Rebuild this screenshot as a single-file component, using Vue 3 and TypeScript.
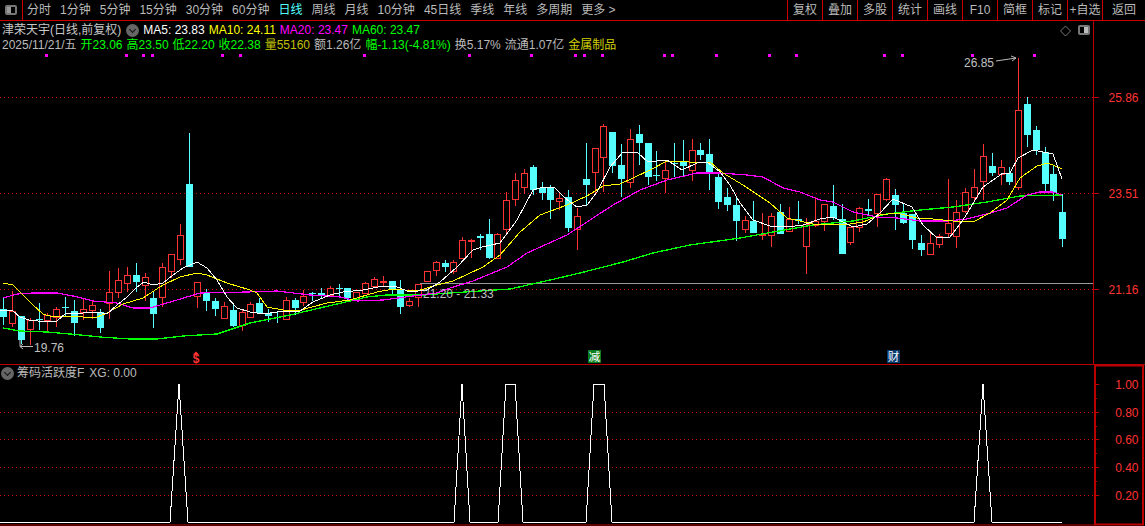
<script setup lang="ts">
type Candle = [number, number, number, number, 0 | 1];
const STEP = 8.825;
const raw: Candle[] = [
[309,317,298,325,0],[311,323,291,327,1],[316,340,316,344,0],[320,329,318,345,1],[319,320,303,330,0],[315,320,313,331,1],[309,317,307,327,1],[307,308,297,317,0],[311,323,300,336,0],[309,312,299,320,1],
[305,310,300,319,1],[312,328,309,333,0],[292,303,271,319,1],[280,292,268,298,1],[275,283,267,292,1],[275,282,263,292,0],[277,285,273,301,1],[298,314,291,328,0],[267,297,263,307,1],[254,271,254,278,1],
[235,259,224,265,1],[184,267,133,267,0],[282,296,282,308,1],[293,301,289,311,0],[301,309,298,316,0],[306,318,302,318,1],[310,326,304,327,0],[312,325,310,331,1],[304,317,302,317,1],[303,313,298,313,0],
[313,316,309,322,0],[317,318,312,323,0],[300,319,297,319,1],[300,308,298,315,0],[296,302,290,306,1],[293,294,292,301,0],[293,296,288,299,0],[288,295,286,297,1],[288,289,284,297,0],[288,298,288,300,0],
[292,299,292,300,1],[283,293,282,293,1],[279,286,277,287,1],[281,282,276,287,1],[281,289,281,295,0],[290,307,280,314,0],[301,305,298,307,1],[284,297,284,307,1],[271,281,271,282,1],[262,270,261,276,1],
[263,267,260,272,0],[262,271,260,274,1],[240,258,237,258,1],[240,241,239,258,1],[236,238,234,250,0],[234,258,219,259,0],[234,258,233,258,1],[200,229,192,233,1],[180,199,173,206,1],[173,187,169,194,1],
[167,190,165,195,0],[188,193,182,200,0],[187,200,185,219,0],[198,201,193,210,1],[197,228,190,232,0],[216,229,208,250,1],[179,185,143,205,0],[148,172,148,193,1],[126,157,124,192,1],[132,166,132,173,0],
[165,179,144,197,0],[139,182,129,188,1],[134,143,125,165,0],[143,177,143,185,0],[175,176,151,181,0],[170,178,160,193,1],[163,164,143,177,0],[161,166,140,177,0],[150,170,139,181,1],[150,155,143,160,0],
[154,174,139,190,0],[177,202,173,209,0],[197,205,188,211,0],[205,221,197,241,0],[220,229,216,233,1],[221,233,201,233,0],[234,235,213,240,1],[216,235,213,247,1],[212,234,204,234,0],[219,231,207,231,1],
[219,221,201,224,0],[224,246,218,274,1],[221,225,197,227,1],[204,221,204,231,1],[206,218,185,220,0],[219,254,204,254,0],[227,242,227,245,1],[208,227,207,232,1],[209,211,199,216,0],[194,213,194,227,1],
[179,199,178,201,1],[195,205,189,230,0],[213,223,203,224,0],[214,240,214,249,0],[243,250,235,256,0],[243,254,233,254,1],[236,244,234,248,1],[223,233,179,237,1],[212,236,200,248,1],[192,211,188,213,1],
[187,197,169,202,1],[156,181,144,200,1],[166,173,153,176,0],[167,174,160,185,1],[173,182,167,185,0],[110,187,58,190,1],[104,135,97,147,0],[130,150,126,155,0],[152,184,147,192,0],[174,193,165,201,0],
[212,239,194,247,0],
];
const candles = raw.map((c, i) => {
  const x = Math.round(3.3 + i * STEP);
  return { x, top: c[0], h: Math.max(c[1] - c[0], 1), w1: c[2], w2: c[3], up: c[4] === 1 };
});
const ma5 = "0,310 13,311 20,317 29,320 38,321 50,321 57,321 65,314 83,313 97,312 107,314 117,305 127,297 137,287 144,282 153,285 163,283 173,275 183,268 197,262 207,268 217,280 227,297 237,308 250,312 263,314 277,312 300,311 313,302 330,295 343,292 363,290 383,286 397,287 410,292 427,290 440,282 457,267 473,250 482,247 500,243 517,220 533,190 543,187 555,188 565,198 577,207 587,205 597,192 610,167 623,152 637,152 648,162 667,160 682,170 697,163 707,162 720,172 730,185 740,203 753,220 770,226 787,227 803,225 820,219 833,217 853,227 867,224 880,213 893,199 912,207 923,225 937,238 950,237 963,220 983,187 1003,173 1010,173 1018,158 1033,150 1053,154 1062,179";
const ma10 = "3,283 13,285 23,295 33,305 43,314 53,317 67,316 83,317 97,317 107,313 123,304 143,298 163,285 180,277 197,273 207,275 227,283 250,290 257,293 267,307 283,310 297,311 327,303 350,300 377,292 393,289 417,291 437,285 453,281 483,267 500,255 520,232 540,215 567,205 587,196 603,186 620,184 633,178 650,170 667,161 680,161 697,163 710,162 723,173 743,185 770,203 787,218 813,224 843,225 863,222 880,215 897,213 917,218 933,219 953,221 973,222 990,213 1007,200 1020,178 1037,166 1048,163 1062,169";
const ma20 = "3,298 17,294 33,293 57,293 73,296 93,301 117,303 133,308 150,308 177,300 200,293 247,292 277,291 310,295 340,297 357,301 383,300 413,296 437,293 450,288 473,281 507,267 527,253 567,235 613,205 640,190 667,180 697,173 720,173 747,175 763,177 783,188 800,192 820,200 833,202 853,212 877,217 897,218 920,221 947,221 967,219 987,214 1007,208 1027,195 1040,192 1053,192 1062,195";
const ma60 = "3,328 20,331 47,332 70,334 100,337 130,339 157,339 183,336 217,334 250,323 290,315 337,304 367,297 387,295 423,295 450,293 510,289 550,280 580,273 623,262 653,253 690,245 740,238 773,232 813,225 853,221 887,214 920,210 953,207 987,202 1020,196 1062,195";
const dots = [46,126,143,152,222,240,364,469,531,575,584,602,664,672,716,769,796,884,902,972,1034];
const priceGrid = [{ y: 97, t: "25.86" }, { y: 193, t: "23.51" }, { y: 289, t: "21.16" }];
const subGrid = [{ y: 412, t: "0.80" }, { y: 439, t: "0.60" }, { y: 467, t: "0.40" }, { y: 495, t: "0.20" }];
const subMinor = [398, 426, 453, 481];
const signal = "0,522 170,522 179,384 188,522 454,522 462,384 470,522 498,522 506,384 515,384 523,522 586,522 594,384 604,384 612,522 974,522 983,384 992,522 1062,522";
const leftTabs = ["分时","1分钟","5分钟","15分钟","30分钟","60分钟","日线","周线","月线","10分钟","45日线","季线","年线","多周期","更多 >"];
const rightTabs = ["复权","叠加","多股","统计","画线","F10","简框","标记","+自选","返回"];
const quote = [
  { l: "开", v: "23.06", c: "green" }, { l: "高", v: "23.50", c: "green" }, { l: "低", v: "22.20", c: "green" },
  { l: "收", v: "22.38", c: "green" }, { l: "量", v: "55160", c: "olive" }, { l: "额", v: "1.26亿", c: "grey" },
  { l: "幅", v: "-1.13(-4.81%)", c: "green" }, { l: "换", v: "5.17%", c: "grey" }, { l: "流通", v: "1.07亿", c: "grey" },
];
</script>

<template>
  <div class="screen">
    <header class="topbar">
      <div class="toggle"><span class="split-icon mirrored"></span></div>
      <nav class="tabs">
        <span v-for="t in leftTabs" :key="t" :class="{ active: t === '日线' }">{{ t }}</span>
      </nav>
      <nav class="actions">
        <span v-for="t in rightTabs" :key="t">{{ t }}</span>
      </nav>
    </header>

    <section class="main-panel">
      <div class="info">
        <div class="info-row">
          <span class="name">津荣天宇(日线,前复权)</span>
          <span class="chev"></span>
          <span class="white">MA5: 23.83</span>
          <span class="yellow">MA10: 24.11</span>
          <span class="magenta">MA20: 23.47</span>
          <span class="green">MA60: 23.47</span>
        </div>
        <div class="info-row quote">
          <span class="grey">2025/11/21/五</span>
          <span v-for="q in quote" :key="q.l" :class="q.c">{{ q.l }}{{ q.v }}</span>
          <span class="gold">金属制品</span>
        </div>
      </div>
      <svg class="plot" viewBox="0 0 1145 526" width="1145" height="526">
        <line v-for="g in priceGrid" :key="g.y" :x1="0" :x2="1093" :y1="g.y + 0.5" :y2="g.y + 0.5" class="dotted" />
        <line x1="420" x2="1093" y1="283.5" y2="283.5" stroke="#999" />
        <rect v-for="d in dots" :key="d" :x="d - 1" y="54" width="3" height="3" fill="#f0f" />
        <g v-for="c in candles" :key="c.x">
          <line :x1="c.x + 0.5" :x2="c.x + 0.5" :y1="c.w1" :y2="c.w2" :stroke="c.up ? '#f33' : '#5ff'" />
          <rect v-if="!c.up" :x="c.x - 3" :y="c.top" width="7" :height="c.h" fill="#5ff" />
          <rect v-else :x="c.x - 2.5" :y="c.top + 0.5" width="6" :height="c.h" fill="#000" stroke="#f33" />
        </g>
        <polyline :points="ma60" class="line" stroke="#0f0" stroke-width="1.3" />
        <polyline :points="ma20" class="line" stroke="#f0f" stroke-width="1.2" />
        <polyline :points="ma10" class="line" stroke="#ff0" stroke-width="1" />
        <polyline :points="ma5" class="line" stroke="#fff" stroke-width="1" />

        <text x="964" y="67" class="note">26.85</text>
        <path d="M996 61 L1016 58 M1011 56 L1016 58 L1012 61" fill="none" stroke="#bbb" />
        <path d="M20 340 V346.5 H33 M23 344 L20 346.5 L23 349" fill="none" stroke="#bbb" />
        <text x="34" y="352" class="note">19.76</text>
        <text x="423" y="298" class="note">21.20 - 21.33</text>

        <text x="196" y="363" class="dollar" text-anchor="middle">$</text>
        <path d="M196 351.5 l-3 3 h6 z" fill="#f33" />
        <rect x="588" y="350" width="13" height="13" fill="#0a7d1e" />
        <text x="594.5" y="361" class="flag" text-anchor="middle" fill="#fff">减</text>
        <rect x="887" y="350" width="13" height="13" fill="#063a6e" />
        <text x="893.5" y="361" class="flag" text-anchor="middle" fill="#fff">财</text>

        <path d="M1065.5 26 l5 5 l-5 5 l-5 -5 z" fill="none" stroke="#777" />

        <line x1="1093.5" x2="1093.5" y1="21" y2="364" stroke="#b00" />
        <line v-for="g in priceGrid" :key="'t' + g.y" x1="1094" x2="1099" :y1="g.y + 0.5" :y2="g.y + 0.5" stroke="#b00" />
        <text v-for="g in priceGrid" :key="'l' + g.y" x="1138.5" :y="g.y + 5" class="axis" text-anchor="end">{{ g.t }}</text>

        <line x1="0" x2="1145" y1="364.5" y2="364.5" stroke="#b00" />
        <line x1="0" x2="1095" y1="525" y2="525" stroke="#b00" />
        <rect x="1095" y="365.5" width="48" height="159" fill="none" stroke="#b00" stroke-width="2" />
        <line v-for="g in subGrid" :key="g.y" x1="0" x2="1093" :y1="g.y + 0.5" :y2="g.y + 0.5" class="dotted" />
        <line v-for="y in subMinor" :key="y" x1="1095" x2="1097" :y1="y + 0.5" :y2="y + 0.5" stroke="#b00" />
        <line x1="1095" x2="1099" y1="384.5" y2="384.5" stroke="#b00" />
        <line v-for="g in subGrid" :key="'s' + g.y" x1="1095" x2="1099" :y1="g.y + 0.5" :y2="g.y + 0.5" stroke="#b00" />
        <text x="1138.5" y="389" class="axis" text-anchor="end">1.00</text>
        <text v-for="g in subGrid" :key="'x' + g.y" x="1138.5" :y="g.y + 5" class="axis" text-anchor="end">{{ g.t }}</text>
        <polyline :points="signal" class="line" stroke="#fff" stroke-width="1" />
      </svg>
      <div class="top-split"><span class="split-icon"></span></div>
    </section>

    <div class="sub-title">
      <span class="chev"></span>
      <span class="grey">筹码活跃度F</span>
      <span class="grey xg">XG: 0.00</span>
    </div>
  </div>
</template>

<style>
html, body { margin: 0; background: #000; }
</style>

<style scoped>
.screen {
  position: relative;
  width: 1145px;
  height: 526px;
  overflow: hidden;
  background: #000;
  color: #c0c0c0;
  font: 12px/15px "Liberation Sans", "Noto Sans CJK SC", sans-serif;
}
.topbar {
  display: flex;
  align-items: center;
  height: 20px;
  border-bottom: 1px solid #c00;
}
.toggle {
  box-sizing: border-box;
  display: flex;
  align-items: center;
  justify-content: center;
  width: 23px;
  height: 20px;
  border-right: 1px solid #c00;
}
.split-icon {
  box-sizing: border-box;
  display: block;
  width: 12px;
  height: 10px;
  border: 2px solid #777;
  border-radius: 2px;
  background: linear-gradient(90deg, #000 50%, #bbb 50%);
}
.split-icon.mirrored {
  background: linear-gradient(90deg, #999 50%, #000 50%);
}
.tabs {
  display: flex;
  padding-left: 4px;
  gap: 9px;
  color: #bbb;
  white-space: nowrap;
}
.tabs .active { color: #5ff; }
.actions {
  display: flex;
  margin-left: auto;
  height: 20px;
  color: #bbb;
}
.actions span {
  box-sizing: border-box;
  width: 35px;
  line-height: 20px;
  text-align: center;
  border-left: 1px solid #c00;
  white-space: nowrap;
}
.actions span:last-child { width: 43px; }
.main-panel { position: relative; }
.info { position: relative; z-index: 1; padding: 2px 0 0 2px; }
.info-row {
  display: flex;
  align-items: center;
  gap: 4px;
  height: 15px;
  white-space: nowrap;
}
.name { color: #c8c8c8; margin-right: 1px; }
.chev {
  position: relative;
  display: inline-block;
  flex: none;
  width: 13px;
  height: 13px;
  border-radius: 50%;
  background: #666;
}
.chev::after {
  content: "";
  position: absolute;
  left: 3.5px;
  top: 2.5px;
  width: 4px;
  height: 4px;
  border-right: 1px solid #111;
  border-bottom: 1px solid #111;
  transform: rotate(45deg);
}
.white { color: #fff; }
.yellow { color: #ff0; }
.magenta { color: #f0f; }
.green { color: #0f0; }
.grey { color: #bbb; }
.olive { color: #c0c000; }
.gold { color: #d0d000; }
.plot {
  position: absolute;
  left: 0;
  top: -21px;
}
.top-split {
  position: absolute;
  left: 1078px;
  top: 4px;
}
.line {
  fill: none;
  shape-rendering: crispEdges;
}
.dotted {
  stroke: #c00;
  stroke-dasharray: 1 3;
  shape-rendering: crispEdges;
}
.note {
  font: 12px "Liberation Sans", sans-serif;
  fill: #c0c0c0;
}
.axis {
  font: 12px "Liberation Sans", sans-serif;
  fill: #f33;
}
.flag {
  font: 11.5px "Noto Sans CJK SC", sans-serif;
}
.dollar {
  font: 700 12px "Liberation Sans", sans-serif;
  fill: #f33;
}
.sub-title {
  position: absolute;
  left: 1px;
  top: 366px;
  display: flex;
  align-items: center;
  gap: 3px;
  white-space: nowrap;
}
.xg { margin-left: 2px; }
</style>
